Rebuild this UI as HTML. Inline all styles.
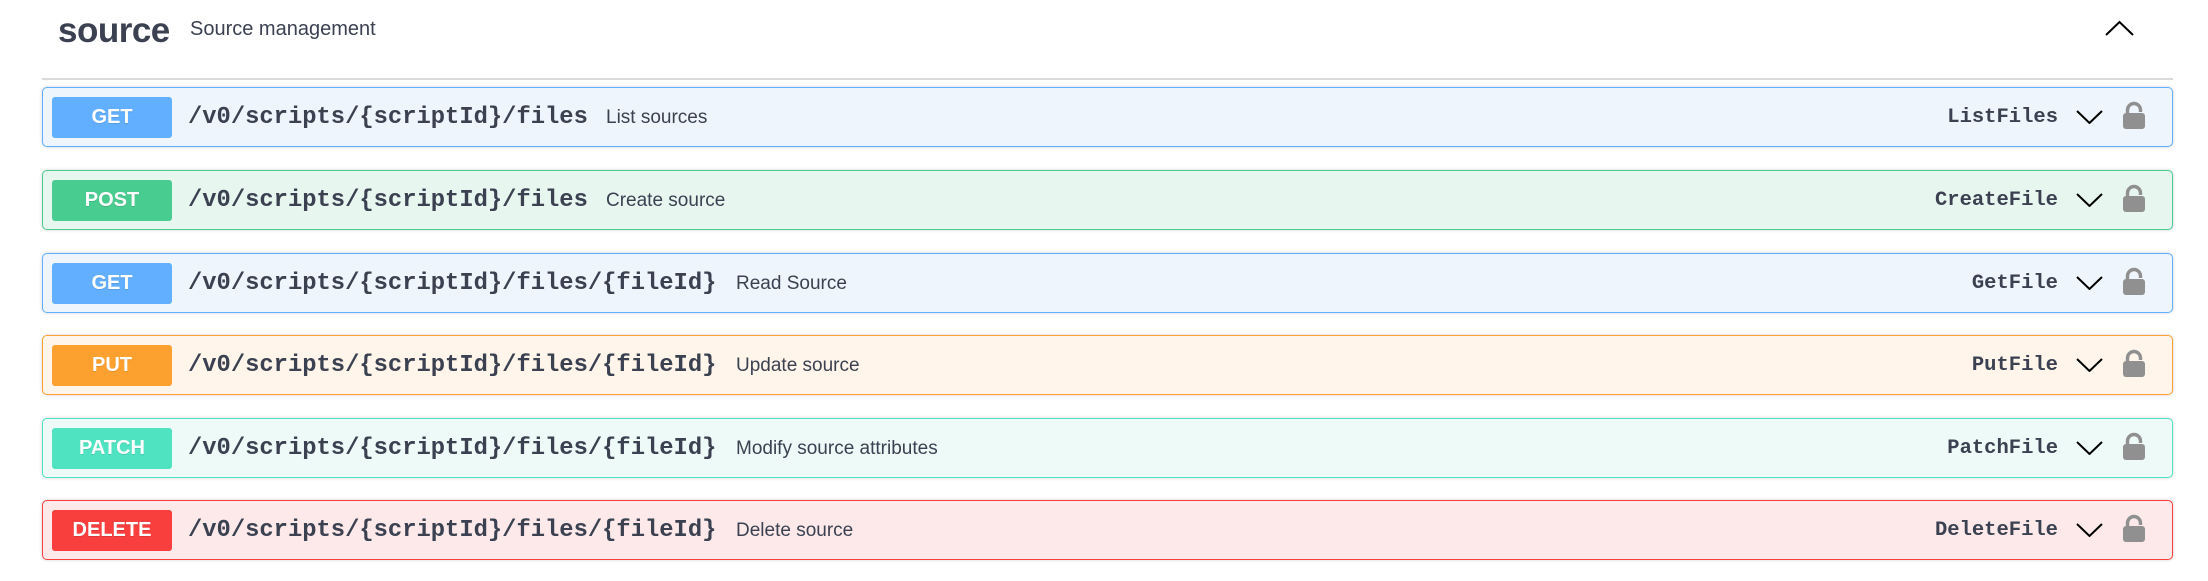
<!DOCTYPE html>
<html><head><meta charset="utf-8"><style>
*{margin:0;padding:0;box-sizing:border-box}
body{width:2208px;height:581px;background:#fff;position:relative;overflow:hidden;font-family:"Liberation Sans",sans-serif;color:#3b4151}
.title{position:absolute;left:58px;top:11px;font-size:35px;font-weight:bold;letter-spacing:-0.5px}
.sub{position:absolute;left:190px;top:18px;font-size:20px}
.rule{position:absolute;left:42px;width:2131px;top:78px;height:2px;background:#d9dadc}
.op{position:absolute;left:42px;width:2131px;height:60px;border:1px solid;border-radius:5px;box-shadow:0 0 3px rgba(0,0,0,.19)}
.badge{position:absolute;left:9px;top:9px;width:120px;height:41px;border-radius:3px;color:#fff;font-weight:bold;font-size:20px;text-align:center;line-height:41px;text-shadow:0 1px 0 rgba(0,0,0,.1)}
.path{position:absolute;left:145px;top:16px;font-family:"Liberation Mono",monospace;font-weight:bold;font-size:23.8px;line-height:28px}
.sum{position:absolute;top:18px;font-size:19px;line-height:24px}
.id{position:absolute;right:114px;top:17px;font-family:"Liberation Mono",monospace;font-weight:bold;font-size:20.5px;line-height:26px}
.chev{position:absolute;left:2033px;top:22px}
.lock{position:absolute;left:2080px;top:13px}
.get{background:#eff5fc;border-color:#61affe}.get .badge{background:#61affe}
.post{background:#e8f6f0;border-color:#49cc90}.post .badge{background:#49cc90}
.put{background:#fff5ea;border-color:#fca130}.put .badge{background:#fca130}
.patch{background:#edfaf7;border-color:#50e3c2}.patch .badge{background:#50e3c2}
.del{background:#fde9e9;border-color:#f93e3e}.del .badge{background:#f93e3e}
</style></head><body>
<div class="title">source</div>
<div class="sub">Source management</div>
<svg style="position:absolute;left:2105px;top:20px" width="29" height="17" viewBox="0 0 29 17"><path d="M1 15 L14.5 2 L28 15" fill="none" stroke="#000" stroke-width="2"/></svg>
<div class="rule"></div>

<div class="op get" style="top:87px"><div class="badge">GET</div><div class="path">/v0/scripts/{scriptId}/files</div><div class="sum" style="left:563px">List sources</div><div class="id">ListFiles</div>
<svg class="chev" width="27" height="14" viewBox="0 0 27 14"><path d="M1 1 L13.5 13 L26 1" fill="none" stroke="#000" stroke-width="2"/></svg>
<svg class="lock" width="22" height="28" viewBox="0 0 22 28"><path d="M4.5 13 V9 a6.5 6.5 0 0 1 13 0 V11" fill="none" stroke="#909090" stroke-width="3.4"/><rect x="0" y="12" width="22" height="16" rx="3" fill="#909090"/></svg></div>

<div class="op post" style="top:170px"><div class="badge">POST</div><div class="path">/v0/scripts/{scriptId}/files</div><div class="sum" style="left:563px">Create source</div><div class="id">CreateFile</div>
<svg class="chev" width="27" height="14" viewBox="0 0 27 14"><path d="M1 1 L13.5 13 L26 1" fill="none" stroke="#000" stroke-width="2"/></svg>
<svg class="lock" width="22" height="28" viewBox="0 0 22 28"><path d="M4.5 13 V9 a6.5 6.5 0 0 1 13 0 V11" fill="none" stroke="#909090" stroke-width="3.4"/><rect x="0" y="12" width="22" height="16" rx="3" fill="#909090"/></svg></div>

<div class="op get" style="top:253px"><div class="badge">GET</div><div class="path">/v0/scripts/{scriptId}/files/{fileId}</div><div class="sum" style="left:693px">Read Source</div><div class="id">GetFile</div>
<svg class="chev" width="27" height="14" viewBox="0 0 27 14"><path d="M1 1 L13.5 13 L26 1" fill="none" stroke="#000" stroke-width="2"/></svg>
<svg class="lock" width="22" height="28" viewBox="0 0 22 28"><path d="M4.5 13 V9 a6.5 6.5 0 0 1 13 0 V11" fill="none" stroke="#909090" stroke-width="3.4"/><rect x="0" y="12" width="22" height="16" rx="3" fill="#909090"/></svg></div>

<div class="op put" style="top:335px"><div class="badge">PUT</div><div class="path">/v0/scripts/{scriptId}/files/{fileId}</div><div class="sum" style="left:693px">Update source</div><div class="id">PutFile</div>
<svg class="chev" width="27" height="14" viewBox="0 0 27 14"><path d="M1 1 L13.5 13 L26 1" fill="none" stroke="#000" stroke-width="2"/></svg>
<svg class="lock" width="22" height="28" viewBox="0 0 22 28"><path d="M4.5 13 V9 a6.5 6.5 0 0 1 13 0 V11" fill="none" stroke="#909090" stroke-width="3.4"/><rect x="0" y="12" width="22" height="16" rx="3" fill="#909090"/></svg></div>

<div class="op patch" style="top:418px"><div class="badge">PATCH</div><div class="path">/v0/scripts/{scriptId}/files/{fileId}</div><div class="sum" style="left:693px">Modify source attributes</div><div class="id">PatchFile</div>
<svg class="chev" width="27" height="14" viewBox="0 0 27 14"><path d="M1 1 L13.5 13 L26 1" fill="none" stroke="#000" stroke-width="2"/></svg>
<svg class="lock" width="22" height="28" viewBox="0 0 22 28"><path d="M4.5 13 V9 a6.5 6.5 0 0 1 13 0 V11" fill="none" stroke="#909090" stroke-width="3.4"/><rect x="0" y="12" width="22" height="16" rx="3" fill="#909090"/></svg></div>

<div class="op del" style="top:500px"><div class="badge">DELETE</div><div class="path">/v0/scripts/{scriptId}/files/{fileId}</div><div class="sum" style="left:693px">Delete source</div><div class="id">DeleteFile</div>
<svg class="chev" width="27" height="14" viewBox="0 0 27 14"><path d="M1 1 L13.5 13 L26 1" fill="none" stroke="#000" stroke-width="2"/></svg>
<svg class="lock" width="22" height="28" viewBox="0 0 22 28"><path d="M4.5 13 V9 a6.5 6.5 0 0 1 13 0 V11" fill="none" stroke="#909090" stroke-width="3.4"/><rect x="0" y="12" width="22" height="16" rx="3" fill="#909090"/></svg></div>
</body></html>
